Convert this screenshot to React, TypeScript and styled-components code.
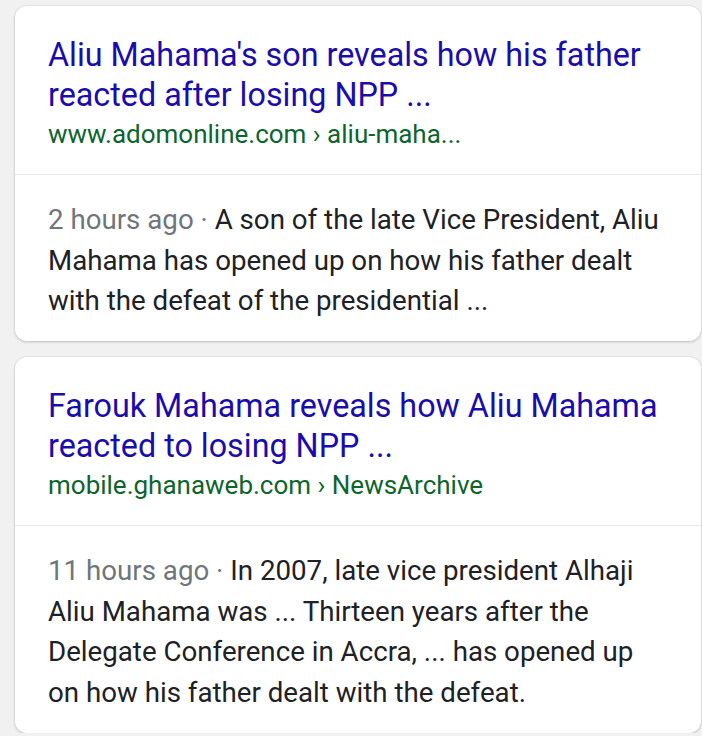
import React from "react";
import styled, { createGlobalStyle } from "styled-components";

const Global = createGlobalStyle`
  html, body { margin: 0; padding: 0; background: #f1f1f1; }
  body { font-family: Roboto, "Noto Sans", Arial, sans-serif; }
`;

const Page = styled.div`
  display: flex;
  flex-direction: column;
  gap: 16px;
  padding: 6px 1px 0 15px;
`;

const Card = styled.div`
  background: #fff;
  border-radius: 12px;
  box-shadow: 0 1px 3px rgba(0, 0, 0, 0.2), 0 0 0 1px rgba(0, 0, 0, 0.03);
  overflow: hidden;
`;

const Header = styled.div`
  padding: 29px 20px 21px 33px;
  border-bottom: 1px solid #e8e8e8;
`;

const Title = styled.div`
  color: #1a0dab;
  font-size: 32.3px;
  line-height: 40px;
`;

const Url = styled.div`
  color: #0d652d;
  font-size: 26px;
  line-height: 38px;
`;

const Body = styled.div`
  padding: 25px 34px 19.5px 33px;
  color: #202124;
  font-size: 27.7px;
  line-height: 40.5px;
`;

const Time = styled.span`
  color: #70757a;
`;

const results = [
  {
    title: "Aliu Mahama's son reveals how his father reacted after losing NPP ...",
    url: "www.adomonline.com › aliu-maha...",
    time: "2 hours ago",
    text: "A son of the late Vice President, Aliu Mahama has opened up on how his father dealt with the defeat of the presidential ...",
  },
  {
    title: "Farouk Mahama reveals how Aliu Mahama reacted to losing NPP ...",
    url: "mobile.ghanaweb.com › NewsArchive",
    time: "11 hours ago",
    text: "In 2007, late vice president Alhaji Aliu Mahama was ... Thirteen years after the Delegate Conference in Accra, ... has opened up on how his father dealt with the defeat.",
  },
];

export default function App() {
  return (
    <>
      <Global />
      <Page>
        {results.map((r) => (
          <Card key={r.url}>
            <Header>
              <Title>{r.title}</Title>
              <Url>{r.url}</Url>
            </Header>
            <Body>
              <Time>{r.time} · </Time>
              {r.text}
            </Body>
          </Card>
        ))}
      </Page>
    </>
  );
}
